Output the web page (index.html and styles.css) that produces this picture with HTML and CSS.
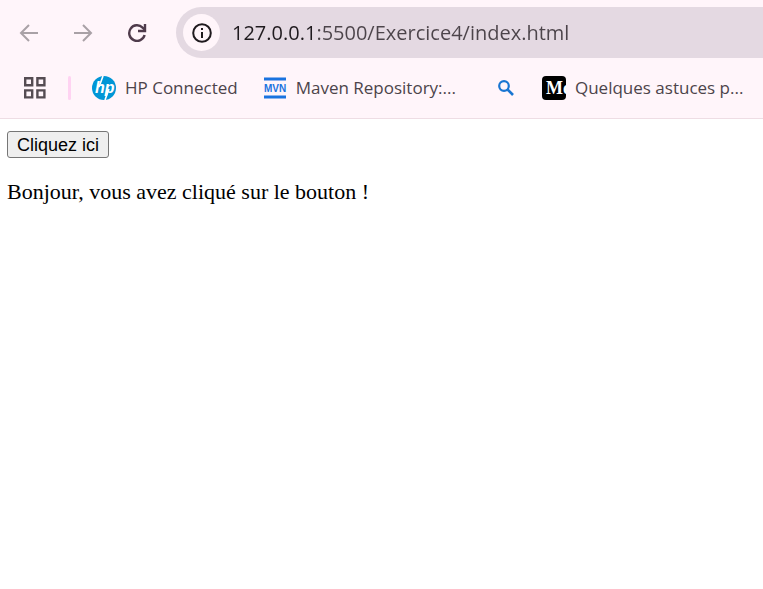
FILE: index.html
```html
<!DOCTYPE html>
<html lang="fr">
<head>
<meta charset="utf-8">
<title>Exercice 4</title>
<link rel="stylesheet" href="styles.css">
</head>
<body>
<header class="browser">
  <div class="toolbar">
    <nav class="controls">
      <button class="nav-button muted" type="button" aria-label="Précédent">
        <svg width="20" height="20" viewBox="0 0 20 20" fill="none" stroke="currentColor" stroke-width="2"><path d="M19 10H2M10 2L2 10l8 8"/></svg>
      </button>
      <button class="nav-button muted" type="button" aria-label="Suivant">
        <svg width="20" height="20" viewBox="0 0 20 20" fill="none" stroke="currentColor" stroke-width="2"><path d="M1 10h17M10 2l8 8-8 8"/></svg>
      </button>
      <button class="nav-button" type="button" aria-label="Actualiser">
        <svg width="20" height="20" viewBox="0 0 20 20" fill="none" stroke="currentColor" stroke-width="2.4"><path d="M17.6 12A7.8 7.8 0 1 1 15.6 4.6L18 7"/><path d="M18 1v7h-7"/></svg>
      </button>
    </nav>
    <div class="address">
      <button class="site-info" type="button" aria-label="Informations sur le site">
        <svg width="20" height="20" viewBox="0 0 20 20" fill="none" stroke="currentColor" stroke-width="2"><circle cx="10" cy="10" r="8.8"/><path d="M10 9v6M10 5v2"/></svg>
      </button>
      <input class="url" type="text" aria-label="Adresse" spellcheck="false" value="127.0.0.1:5500/Exercice4/index.html">
    </div>
  </div>
  <nav class="bookmarks">
    <button class="apps" type="button" aria-label="Applications">
      <svg width="22" height="22" viewBox="0 0 22 22" fill="none" stroke="currentColor" stroke-width="2.4"><path d="M1.2 1.2h7v7h-7zM13.4 1.2h7v7h-7zM1.2 13.4h7v7h-7zM13.4 13.4h7v7h-7z"/></svg>
    </button>
    <span class="divider"></span>
    <a class="bookmark hp" href="#">
      <svg width="24" height="24" viewBox="0 0 24 24" aria-hidden="true"><circle cx="12" cy="12" r="12" fill="#0096d6"/><path d="M11 0L7 11M13 24l4-11" stroke="#fff" stroke-width="1.6"/><text x="3" y="17" class="hp-mark">hp</text></svg>
      <span>HP Connected</span>
    </a>
    <a class="bookmark maven" href="#">
      <svg width="24" height="24" viewBox="0 0 24 24" aria-hidden="true"><path d="M1 3h22M1 21h22" stroke="#1a73df" stroke-width="3"/><text x="12" y="16" class="mvn-mark">MVN</text></svg>
      <span>Maven Repository:...</span>
    </a>
    <a class="bookmark search" href="#" aria-label="Recherche">
      <svg width="16" height="16" viewBox="0 0 16 16" fill="none" stroke="#1976d2" stroke-width="2.2"><circle cx="6" cy="6" r="4.8"/><path d="M9.5 9.5L15 15" stroke-width="2.6"/></svg>
    </a>
    <a class="bookmark medium" href="#">
      <svg width="24" height="24" viewBox="0 0 24 24" aria-hidden="true"><rect width="24" height="24" rx="4"/><text x="4" y="18" class="me-mark">Me</text></svg>
      <span>Quelques astuces p...</span>
    </a>
  </nav>
</header>
<main class="page">
  <button class="click-button" type="button">Cliquez ici</button>
  <p class="message">Bonjour, vous avez cliqué sur le bouton !</p>
</main>
</body>
</html>
```
FILE: styles.css
```css
* {
  box-sizing: border-box;
}

body {
  margin: 0;
  background: #fff;
}

.browser {
  background: #fff5fa;
  border-bottom: 1px solid #eedde4;
  font-family: "Open Sans", sans-serif;
}

.toolbar {
  display: flex;
  padding-top: 7px;
}

.controls {
  display: flex;
  padding: 0 12px 0 2px;
}

.nav-button,
.site-info,
.apps {
  display: flex;
  flex: none;
  align-items: center;
  justify-content: center;
  padding: 0;
  border: 0;
  background: none;
  color: #4f3b4b;
}

.nav-button {
  width: 54px;
}

.muted {
  color: #a9a1a6;
}

.address {
  display: flex;
  flex: 1;
  align-items: center;
  gap: 12px;
  height: 51px;
  padding-left: 7px;
  border-radius: 26px 0 0 26px;
  background: #e4d9e2;
}

.site-info {
  width: 37px;
  height: 37px;
  border-radius: 50%;
  background: #fff5fa;
  color: #1f1a1e;
}

.url {
  flex: 1;
  min-width: 0;
  padding: 0;
  border: 0;
  outline: 0;
  font: 20px/28px "Open Sans", sans-serif;
  color: transparent;
  background: linear-gradient(to right, #1f1a1e 84px, #4c444a 84px);
  -webkit-background-clip: text;
  background-clip: text;
}

.bookmarks {
  display: flex;
  align-items: center;
  height: 60px;
  padding-left: 24px;
}

.apps {
  width: 22px;
  height: 22px;
  color: #554c52;
}

.divider {
  flex: none;
  width: 3px;
  height: 24px;
  margin: 0 21px 0 22px;
  border-radius: 2px;
  background: #ffd3f2;
}

.bookmark {
  display: flex;
  flex: none;
  align-items: center;
  gap: 9px;
  color: #4c444a;
  font-size: 17px;
  line-height: 24px;
  text-decoration: none;
  white-space: nowrap;
}

.bookmark svg {
  flex: none;
}

.hp {
  margin-right: 25px;
}

.maven {
  margin-right: 42px;
}

.search {
  margin-right: 28px;
}

.hp-mark {
  fill: #fff;
  font: italic bold 16px "Liberation Sans", sans-serif;
}

.mvn-mark {
  fill: #1a73df;
  font: bold 10px "Liberation Sans", sans-serif;
  text-anchor: middle;
}

.me-mark {
  fill: #fff;
  font: bold 18px "Liberation Serif", serif;
}

.page {
  padding: 12px 7px;
}

.click-button {
  display: block;
  height: 27px;
  padding: 0 9px;
  border: 1px solid #767676;
  border-radius: 3px;
  background: #efefef;
  color: #000;
  font: 18px/24px "Liberation Sans", Arial, sans-serif;
}

.message {
  margin: 21px 0;
  color: #000;
  font: 22px/26px "Liberation Serif", "Times New Roman", serif;
}
```
